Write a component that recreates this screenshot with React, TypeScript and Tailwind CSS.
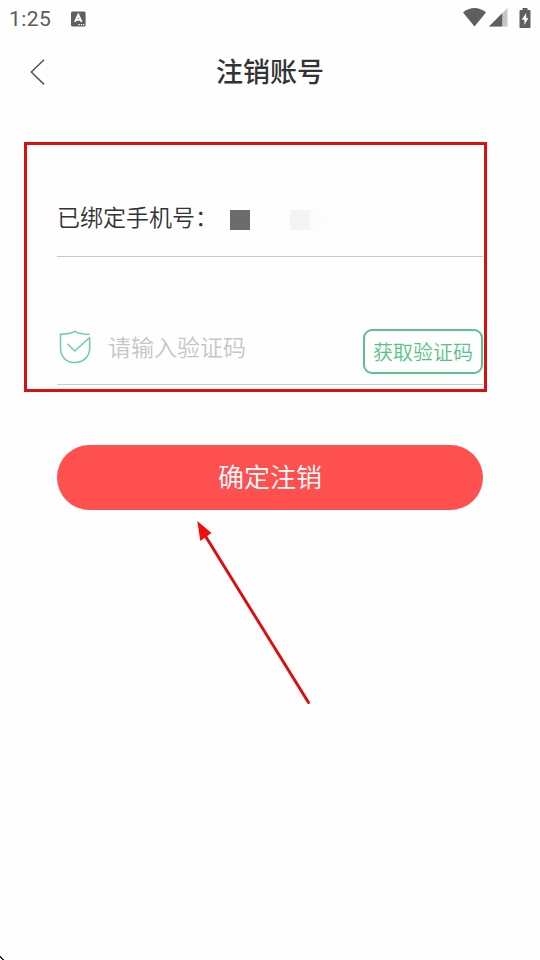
import React from "react";

type IconProps = { className?: string };

function KeyboardIcon({ className }: IconProps) {
  return (
    <svg className={className} viewBox="0 0 15 16" fill="none">
      <rect x="0" y="0.5" width="14.6" height="15" rx="1.5" fill="#5f5f5f" />
      <path d="M4 10.800 7.300 3.800 10.600 10.800M5.300 8.800h4" stroke="#fff" strokeWidth="1.9" />
      <path d="M7.400 13.600h1.400M9.800 13.600h1.400M12.100 13.600h1.200" stroke="#fff" strokeWidth="1.3" />
    </svg>
  );
}

function WifiIcon({ className }: IconProps) {
  return (
    <svg className={className} viewBox="0 0 23 19" fill="#5f5f5f">
      <path d="M0 4.600C6.500-1.400 16.500-1.400 23 4.600L11.500 18.600Z" />
    </svg>
  );
}

function SignalIcon({ className }: IconProps) {
  return (
    <svg className={className} viewBox="0 0 19 19">
      <path d="M0 18.500 18.500 0v18.500Z" fill="#c6c6c6" />
      <path d="M0 18.500 13.200 5.300v13.200Z" fill="#5f5f5f" />
    </svg>
  );
}

function BatteryIcon({ className }: IconProps) {
  return (
    <svg className={className} viewBox="0 0 12 20">
      <path
        d="M3.500 0h5v2H10.500a1 1 0 0 1 1 1v16a1 1 0 0 1-1 1h-9a1 1 0 0 1-1-1V3a1 1 0 0 1 1-1h2Z"
        fill="#5f5f5f"
      />
      <path d="M7.200 5 2.700 11.800h2.700V17L9.400 10H7.200Z" fill="#fff" />
    </svg>
  );
}

function BackIcon({ className }: IconProps) {
  return (
    <svg className={className} viewBox="0 0 16 28" fill="none">
      <path d="M14 1.700 1.300 14 14 26.400" stroke="#555" strokeWidth="1.500" />
    </svg>
  );
}

function ShieldIcon({ className }: IconProps) {
  return (
    <svg
      className={className}
      viewBox="0 0 32 34"
      fill="none"
      stroke="#6bcf9b"
      strokeWidth="1.500"
      strokeLinecap="round"
      strokeLinejoin="round"
    >
      <path d="M30 4.200C24 4.200 20 3.800 15.700 1.300 11.500 3.800 7 4.200 1.500 4.200V18C1.500 27 7.500 32.600 15.700 32.600S30.700 27 30.700 18V8" />
      <path d="M9 14.300 15.700 21 30.300 7.700" />
    </svg>
  );
}

function StatusBar() {
  return (
    <div className="flex h-[37px] items-center justify-between pr-[9px] pl-[9px]">
      <div className="flex items-center">
        <span className="w-[62px] pt-0.5 font-[Roboto,sans-serif] text-[21px] leading-none tracking-[0.4px] text-[#5a5a5a]">
          1:25
        </span>
        <KeyboardIcon className="h-4 w-[15px]" />
      </div>
      <div className="flex items-center pb-0.5">
        <WifiIcon className="h-[19px] w-[23px]" />
        <SignalIcon className="ml-[3px] h-[19px] w-[19px]" />
        <BatteryIcon className="ml-[11px] h-5 w-3" />
      </div>
    </div>
  );
}

function Header() {
  return (
    <header className="grid h-[70px] grid-cols-[60px_1fr_60px] items-center">
      <button className="pl-[30px]">
        <BackIcon className="h-7 w-4" />
      </button>
      <h1 className="pb-[3px] text-center text-[27px] leading-none font-medium text-[#333]">
        注销账号
      </h1>
    </header>
  );
}

function Arrow({ className }: IconProps) {
  return (
    <svg className={className} viewBox="0 0 120 190">
      <path d="M16 22 118.500 187.500" stroke="#df0d0d" strokeWidth="3" strokeLinecap="round" />
      <path d="M7.300 6 10.300 26 21.500 18Z" fill="#f40d0d" />
    </svg>
  );
}

export default function App() {
  return (
    <div className="relative h-[960px] w-[540px] overflow-hidden bg-[#fefefe] font-['Noto_Sans_CJK_SC',sans-serif]">
      <StatusBar />
      <Header />
      <main className="pt-[35px]">
        <section className="ml-6 h-[250px] w-[463px] border-3 border-[#d81010] pl-[30px]">
          <div className="flex h-[112px] w-[426px] items-center border-b border-[#c8c8c8] pt-[34px]">
            <p className="w-[173px] pb-0.5 text-[23px] leading-none font-[350] text-[#333]">
              已绑定手机号：
            </p>
            <span className="mt-1 h-5 w-5 bg-[#6c6c6c]" />
            <span className="mt-1 ml-10 h-5 w-5 bg-[#f4f4f4]" />
            <span className="mt-1 h-5 w-4 bg-[#fcfcfc]" />
          </div>
          <div className="flex h-[128px] w-[426px] items-end border-b border-[#c3cdd3]">
            <ShieldIcon className="mb-5 ml-0.5 h-[34px] w-8" />
            <input
              className="mb-[20px] ml-[17px] h-9 w-[255px] text-[23px] font-[350] outline-none placeholder:text-[#c6c6c6]"
              placeholder="请输入验证码"
            />
            <button className="mb-2.5 h-[45px] w-[120px] shrink-0 rounded-[9px] border-2 border-[#5dc18a] text-[20px] leading-none font-[350] text-[#55c488]">
              获取验证码
            </button>
          </div>
        </section>
        <button className="mt-[53px] ml-[57px] h-[65px] w-[426px] rounded-full bg-[#ff5050] pb-[3px] text-[26px] leading-none font-[350] text-white">
          确定注销
        </button>
      </main>
      <Arrow className="absolute top-[515px] left-[190px] h-[190px] w-[120px]" />
      <svg className="absolute bottom-0 left-0 h-1 w-1" viewBox="0 0 4 4">
        <path d="M0 0h1v1h1v1h1v1h1v1H2V3H1V2H0Z" fill="#222" />
      </svg>
    </div>
  );
}
